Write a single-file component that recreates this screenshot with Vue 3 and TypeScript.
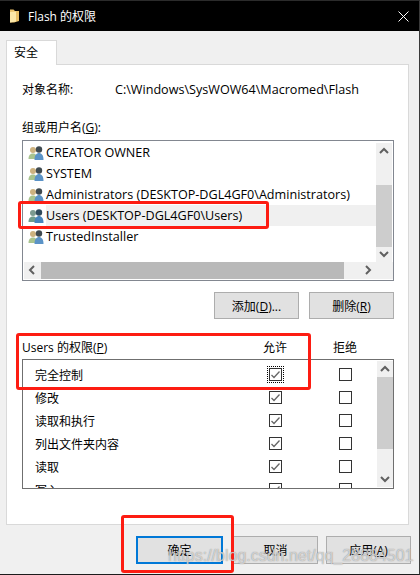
<script setup lang="ts">
const users = [
  { name: 'CREATOR OWNER', selected: false },
  { name: 'SYSTEM', selected: false },
  { name: 'Administrators (DESKTOP-DGL4GF0\\Administrators)', selected: false },
  { name: 'Users (DESKTOP-DGL4GF0\\Users)', selected: true },
  { name: 'TrustedInstaller', selected: false },
]
const perms = [
  { name: '完全控制', focus: true },
  { name: '修改', focus: false },
  { name: '读取和执行', focus: false },
  { name: '列出文件夹内容', focus: false },
  { name: '读取', focus: false },
  { name: '写入', focus: false },
]
</script>

<template>
  <div class="window">
    <header class="titlebar">
      <svg class="folder" width="9" height="14" viewBox="0 0 9 14">
        <path d="M0 0.500 H3.500 L5 2 H9 V12 L4 13.500 H0 Z" fill="#e9c069" />
        <path d="M0 3 L6 2.500 V12.500 L0 13.500 Z" fill="#fbe7a8" />
      </svg>
      <span class="title">Flash 的权限</span>
      <svg class="close" width="11" height="11" viewBox="0 0 11 11">
        <path d="M0.500 0.500 L10.500 10.500 M10.500 0.500 L0.500 10.500" stroke="#ffffff" stroke-width="1" fill="none" />
      </svg>
    </header>

    <main class="body">
      <div class="tabs"><div class="tab">安全</div></div>
      <section class="panel">
        <div class="object">
          <span class="object-label">对象名称:</span>
          <span class="object-path">C:\Windows\SysWOW64\Macromed\Flash</span>
        </div>

        <div class="group-label">组或用户名(<u>G</u>):</div>
        <div class="listbox">
          <div class="list-main">
            <div class="rows">
              <div v-for="u in users" :key="u.name" class="user" :class="{ selected: u.selected }">
                <svg class="people" width="16" height="16" viewBox="0 0 16 16">
                  <circle class="head-a" cx="5" cy="5" r="3" />
                  <path class="body-a" d="M0.500 14 C0.500 10 2.500 8.500 5 8.500 C7.500 8.500 9 10 9 14 Z" />
                  <circle class="head-b" cx="11" cy="4.500" r="3.200" />
                  <path class="body-b" d="M6.500 15 C6.500 10 8.500 8 11 8 C13.500 8 15.500 10 15.500 15 Z" />
                </svg>
                <span class="user-name">{{ u.name }}</span>
              </div>
            </div>
            <div class="vbar">
              <svg class="arrow" width="16" height="16" viewBox="0 0 16 16"><path d="M4 10 L8 6 L12 10" /></svg>
              <div class="vspace"><div class="vthumb"></div></div>
              <svg class="arrow" width="16" height="16" viewBox="0 0 16 16"><path d="M4 6 L8 10 L12 6" /></svg>
            </div>
          </div>
          <div class="hbar">
            <svg class="arrow" width="17" height="16" viewBox="0 0 17 16"><path d="M10 4 L6 8 L10 12" /></svg>
            <div class="hthumb"></div>
            <div class="htrack"></div>
            <svg class="arrow" width="17" height="16" viewBox="0 0 17 16"><path d="M7 4 L11 8 L7 12" /></svg>
            <div class="hcorner"></div>
          </div>
        </div>

        <div class="list-actions">
          <button class="btn" type="button">添加(<u>D</u>)...</button>
          <button class="btn" type="button">删除(<u>R</u>)</button>
        </div>

        <div class="perm-head">
          <span class="perm-title">Users 的权限(<u>P</u>)</span>
          <span class="col">允许</span>
          <span class="col">拒绝</span>
        </div>
        <div class="permbox">
          <div class="perm-rows">
            <div v-for="p in perms" :key="p.name" class="perm">
              <span class="perm-name">{{ p.name }}</span>
              <span class="cell">
                <span class="check" :class="{ focus: p.focus }">
                  <svg width="11" height="11" viewBox="0 0 11 11"><path d="M1.500 6 L4 8.500 L9.500 2.500" /></svg>
                </span>
              </span>
              <span class="cell"><span class="check"></span></span>
            </div>
          </div>
          <div class="vbar perm-bar">
            <svg class="arrow" width="16" height="16" viewBox="0 0 16 16"><path d="M4 10 L8 6 L12 10" /></svg>
            <div class="vspace"><div class="pthumb"></div></div>
            <svg class="arrow" width="16" height="16" viewBox="0 0 16 16"><path d="M4 6 L8 10 L12 6" /></svg>
          </div>
        </div>
      </section>

      <footer class="footer">
        <button class="btn wide primary" type="button">确定</button>
        <button class="btn wide cancel" type="button">取消</button>
        <button class="btn wide" type="button">应用(<u>A</u>)</button>
      </footer>
    </main>

    <div class="mark mark-user"></div>
    <div class="mark mark-perm"></div>
    <div class="mark mark-ok"></div>
    <div class="watermark">https://blog.csdn.net/qq_28884501</div>
  </div>
</template>

<style>
html, body { margin: 0; background: #f0f0f0; }
</style>

<style scoped>
.window {
  position: relative;
  width: 420px;
  height: 575px;
  box-sizing: border-box;
  display: flex;
  flex-direction: column;
  overflow: hidden;
  background: #f0f0f0;
  border-top: 1px solid #2b2b2b;
  border-bottom: 1px solid #1c1c1c;
  border-right: 1px solid #3a3a3a;
  font-family: "Open Sans", "Noto Sans CJK SC", sans-serif;
  font-size: 12px;
  color: #000;
}
.titlebar {
  height: 30px;
  flex: none;
  background: #000;
  color: #fff;
  display: flex;
  align-items: center;
  padding: 0 10px 0 10px;
  gap: 9px;
}
.title { flex: 1; }
.body { flex: 1; display: flex; flex-direction: column; padding: 9px 10px 0 6px; min-height: 0; }
.tabs { display: flex; height: 24px; flex: none; }
.tab {
  width: 51px;
  height: 25px;
  box-sizing: border-box;
  background: #fff;
  border: 1px solid #d9d9d9;
  border-bottom: 0;
  padding: 2px 0 0 7px;
  position: relative;
  z-index: 1;
}
.panel {
  height: 461px;
  flex: none;
  box-sizing: border-box;
  background: #fff;
  border: 1px solid #d9d9d9;
  padding: 15px 14px 0 15px;
}
.object { display: flex; height: 18px; align-items: center; }
.object-label { width: 93px; }
.object-path { font-size: 12.600px; }
.group-label { margin-top: 21px; height: 18px; line-height: 18px; }
.listbox {
  margin-top: 3px;
  height: 141px;
  box-sizing: border-box;
  border: 1px solid #828790;
  display: flex;
  flex-direction: column;
}
.list-main { flex: 1; display: flex; min-height: 0; }
.rows { flex: 1; padding-top: 1px; min-width: 0; }
.user { height: 21px; display: flex; align-items: center; gap: 2px; padding-left: 5px; white-space: nowrap; font-size: 12.600px; }
.user-name { flex: 1; height: 21px; line-height: 21px; }
.user.selected .user-name { background: #f0f0f0; }
.head-a { fill: #cdb27f; }
.body-a { fill: #a9c48f; }
.head-b { fill: #3f4a50; }
.body-b { fill: #5b93c7; }
.selected .head-a { fill: #7c9a90; }
.selected .body-a { fill: #6f9c8c; }
.selected .head-b { fill: #2f4a5c; }
.selected .body-b { fill: #4785bd; }
.vbar {
  width: 16px;
  margin: 2px 1px 0 0;
  flex: none;
  background: #f0f0f0;
  display: flex;
  flex-direction: column;
}
.vspace { flex: 1; min-height: 0; }
.vthumb { height: 62px; margin-top: 26px; background: #cdcdcd; }
.arrow { flex: none; display: block; }
.arrow path { fill: none; stroke: #606060; stroke-width: 2; }
.hbar { height: 17px; flex: none; display: flex; background: #f0f0f0; margin: 0 0 1px 1px; }
.hthumb { width: 303px; background: #b9b9b9; flex: none; }
.htrack { width: 15px; flex: none; }
.hcorner { width: 16px; background: #f0f0f0; }
.list-actions { display: flex; justify-content: flex-end; gap: 10px; margin-top: 11px; height: 27px; }
.btn {
  width: 85px;
  height: 27px;
  box-sizing: border-box;
  background: #e1e1e1;
  border: 1px solid #adadad;
  padding: 0;
  font: inherit;
  color: #000;
}
.perm-head { display: flex; align-items: center; height: 18px; margin-top: 19px; }
.perm-title { width: 218px; flex: none; }
.col { width: 70px; text-align: center; flex: none; }
.permbox {
  margin-top: 3px;
  height: 130px;
  box-sizing: border-box;
  border: 1px solid #6f6f6f;
  display: flex;
  overflow: hidden;
}
.perm-rows { flex: 1; padding-top: 3px; min-width: 0; }
.perm { height: 23px; display: flex; align-items: center; }
.perm-name { width: 217px; flex: none; padding-left: 12px; box-sizing: border-box; }
.cell { width: 70px; flex: none; display: flex; justify-content: center; }
.check {
  position: relative;
  width: 13px;
  height: 13px;
  box-sizing: border-box;
  border: 1px solid #333;
  background: #fff;
  display: flex;
  align-items: center;
  justify-content: center;
}
.check svg { display: block; }
.check path { fill: none; stroke: #666; stroke-width: 1.300; }
.check.focus { outline: 1px dotted #000; outline-offset: 1px; }
.perm-bar { margin: 1px 0 1px 0; }
.pthumb { height: 72px; background: #cdcdcd; }
.footer { display: flex; justify-content: flex-end; gap: 8px; margin: 11px -2px 0 0; }
.wide { height: 28px; }
.primary { border: 2px solid #0078d7; width: 87px; }
.cancel { margin-left: 2px; }
.mark {
  position: absolute;
  box-sizing: border-box;
  border: 3px solid #fd1c12;
  border-radius: 3px;
  pointer-events: none;
}
.mark-user { left: 18px; top: 200px; width: 251px; height: 28px; }
.mark-perm { left: 16px; top: 332px; width: 295px; height: 57px; }
.mark-ok { left: 121px; top: 514px; width: 113px; height: 58px; }
.watermark {
  position: absolute;
  left: 168px;
  top: 546px;
  font-family: "Liberation Sans", sans-serif;
  font-size: 16px;
  color: rgba(255, 255, 255, 0.6);
  text-shadow: 0 0 1px rgba(110, 110, 110, 0.9);
  white-space: nowrap;
  pointer-events: none;
}
</style>
